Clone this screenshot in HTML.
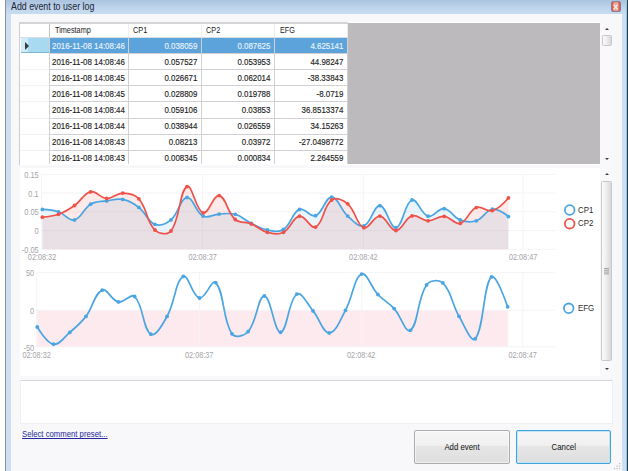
<!DOCTYPE html><html><head><meta charset="utf-8"><style>
*{margin:0;padding:0;box-sizing:border-box}
html,body{width:628px;height:471px;overflow:hidden;background:#fff;font-family:"Liberation Sans",sans-serif}
.frame{position:absolute;left:4.6px;top:0;width:623.4px;height:471px;background:#cddff2;border-left:1.6px solid #8c8f94}
.frr{position:absolute;left:626px;top:0;width:2px;height:471px;background:linear-gradient(90deg,#86cdee 0,#86cdee 50%,#343a3c 50%)}
.titlebar{position:absolute;left:6.2px;top:0;width:619.8px;height:14px;background:linear-gradient(#abc4df,#c3d9ee 75%,#c6dcf0)}
.title{position:absolute;left:11px;top:1.2px;font-size:10.2px;line-height:12px;color:#1b2433;white-space:nowrap;transform-origin:0 0;transform:scaleX(0.865)}
.client{position:absolute;left:11px;top:13.5px;width:611px;height:458px;background:#f8f8fb}
.closebtn{position:absolute;left:611px;top:1.2px;width:10px;height:10.5px;border-radius:2px;background:linear-gradient(90deg,#d9503a,#eea392 35%,#eea392 65%,#d9503a);border:1px solid #8f7890}

.hdr{position:absolute;background:#fff;border-bottom:1px solid #d9d6d9}
.ht{position:absolute;height:15px;line-height:15px;font-size:9px;color:#222;white-space:nowrap;transform-origin:0 50%;transform:scaleX(.81)}
.row{position:absolute;left:30px;width:299px;height:15.95px;background:#fff;border-bottom:1px solid #cfcccf}
.row.sel{background:#5ba3da;border-bottom:1px solid #cfcccf}
.rh{position:absolute;left:0;width:30px;height:15.95px;background:#f8f8fa;border-bottom:1px solid #e2e0e2}
.rhsel{background:linear-gradient(90deg,#b8e2f6,#a6d6f0);border-bottom:1px solid #7fb3cf}
.t,.tsel{position:absolute;height:15.3px;line-height:16.4px;font-size:9.6px;color:#1a1a1a;white-space:nowrap;-webkit-text-stroke:0.15px currentColor}
.tsel{color:#eaf3fb}
.l{transform-origin:0 50%;transform:scaleX(.825)}
.r{text-align:right;transform-origin:100% 50%;transform:scaleX(.825)}
.vl{position:absolute;width:1px;background:#d2d0d3}
.tri{position:absolute;left:25px;top:41.5px;width:0;height:0;border-left:4px solid #3a3a3a;border-top:4px solid transparent;border-bottom:4px solid transparent}
.gray{position:absolute;left:348px;top:23px;width:252px;height:141.3px;background:#bcbabd}
.sb{position:absolute;background:#f9f9fb}
.arrup{position:absolute;width:0;height:0;border-left:2.8px solid transparent;border-right:2.8px solid transparent;border-bottom:2.8px solid #3c3c3c}
.arrdn{position:absolute;width:0;height:0;border-left:2.8px solid transparent;border-right:2.8px solid transparent;border-top:2.8px solid #3c3c3c}
.thumb{position:absolute;border:1px solid #c8c8ca;border-radius:1.5px;background:linear-gradient(90deg,#fbfbfb,#f0f0f0 40%,#d8d8da)}
.panel{position:absolute;left:20px;top:167.5px;width:581px;height:208px;background:#fff}
.tb{position:absolute;left:19.5px;top:380px;width:593.3px;height:44px;background:#fff;border:1px solid #f0eff3;border-top:1px solid #d9d7dd}
.link{position:absolute;left:21.7px;top:429.3px;font-size:8.6px;color:#26269a;text-decoration:underline;white-space:nowrap;transform-origin:0 0;transform:scaleX(.9)}
.btn{position:absolute;top:430px;width:96px;height:34px;border:1px solid #ababab;border-radius:2px;background:linear-gradient(#f6f6f6 0,#f0f0f0 45%,#e6e6e6 47%,#dedede 100%);box-shadow:inset 0 0 0 1px rgba(255,255,255,.55);font-size:8.7px;color:#111;line-height:32px}
.btn span{position:absolute;left:0;right:0;text-align:center;transform:scaleX(.9)}
.btn.def{border:1px solid #3fa3dc;box-shadow:inset 0 0 0 1px #c2e6f8}
</style></head><body>
<div class="frame"></div><div class="frr"></div>
<div class="titlebar"></div>
<div class="title">Add event to user log</div>
<div class="closebtn"></div><svg style="position:absolute;left:612px;top:2px" width="9" height="9"><path d="M1.6,2.6 L5.8,7.6 M5.8,2.6 L1.6,7.6" stroke="#ece6ea" stroke-width="1.5"/></svg>
<div class="client"></div>
<div style="position:absolute;left:19px;top:22px;width:581px;height:143px;background:#fff"></div><div style="position:absolute;left:19px;top:36.6px;width:329px;height:1px;background:#d8dde3"></div><div style="position:absolute;left:49px;top:37.60px;width:299px;height:15.5px;background:#5ba3da"></div><div style="position:absolute;left:21px;top:37.60px;width:28px;height:15.9px;background:linear-gradient(90deg,#cdebf8 0,#cdebf8 7px,#a9dbf2 7px,#a6d8f0 100%);border-bottom:1.2px solid #7fb5d3"></div><div style="position:absolute;left:49px;top:53.10px;width:299px;height:1px;background:#d2d0d3"></div><div class="tsel l" style="left:51.8px;top:37.60px">2016-11-08 14:08:46</div><div class="tsel r" style="left:128px;width:69.4px;top:37.60px">0.038059</div><div class="tsel r" style="left:201px;width:69.4px;top:37.60px">0.087625</div><div class="tsel r" style="left:274px;width:69.4px;top:37.60px">4.625141</div><div style="position:absolute;left:49px;top:69.20px;width:299px;height:1px;background:#d2d0d3"></div><div style="position:absolute;left:20px;top:69.20px;width:29px;height:1px;background:#f3f2f4"></div><div class="t l" style="left:51.8px;top:53.70px">2016-11-08 14:08:46</div><div class="t r" style="left:128px;width:69.4px;top:53.70px">0.057527</div><div class="t r" style="left:201px;width:69.4px;top:53.70px">0.053953</div><div class="t r" style="left:274px;width:69.4px;top:53.70px">44.98247</div><div style="position:absolute;left:49px;top:85.30px;width:299px;height:1px;background:#d2d0d3"></div><div style="position:absolute;left:20px;top:85.30px;width:29px;height:1px;background:#f3f2f4"></div><div class="t l" style="left:51.8px;top:69.80px">2016-11-08 14:08:45</div><div class="t r" style="left:128px;width:69.4px;top:69.80px">0.026671</div><div class="t r" style="left:201px;width:69.4px;top:69.80px">0.062014</div><div class="t r" style="left:274px;width:69.4px;top:69.80px">-38.33843</div><div style="position:absolute;left:49px;top:101.40px;width:299px;height:1px;background:#d2d0d3"></div><div style="position:absolute;left:20px;top:101.40px;width:29px;height:1px;background:#f3f2f4"></div><div class="t l" style="left:51.8px;top:85.90px">2016-11-08 14:08:45</div><div class="t r" style="left:128px;width:69.4px;top:85.90px">0.028809</div><div class="t r" style="left:201px;width:69.4px;top:85.90px">0.019788</div><div class="t r" style="left:274px;width:69.4px;top:85.90px">-8.0719</div><div style="position:absolute;left:49px;top:117.50px;width:299px;height:1px;background:#d2d0d3"></div><div style="position:absolute;left:20px;top:117.50px;width:29px;height:1px;background:#f3f2f4"></div><div class="t l" style="left:51.8px;top:102.00px">2016-11-08 14:08:44</div><div class="t r" style="left:128px;width:69.4px;top:102.00px">0.059106</div><div class="t r" style="left:201px;width:69.4px;top:102.00px">0.03853</div><div class="t r" style="left:274px;width:69.4px;top:102.00px">36.8513374</div><div style="position:absolute;left:49px;top:133.60px;width:299px;height:1px;background:#d2d0d3"></div><div style="position:absolute;left:20px;top:133.60px;width:29px;height:1px;background:#f3f2f4"></div><div class="t l" style="left:51.8px;top:118.10px">2016-11-08 14:08:44</div><div class="t r" style="left:128px;width:69.4px;top:118.10px">0.038944</div><div class="t r" style="left:201px;width:69.4px;top:118.10px">0.026559</div><div class="t r" style="left:274px;width:69.4px;top:118.10px">34.15263</div><div style="position:absolute;left:49px;top:149.70px;width:299px;height:1px;background:#d2d0d3"></div><div style="position:absolute;left:20px;top:149.70px;width:29px;height:1px;background:#f3f2f4"></div><div class="t l" style="left:51.8px;top:134.20px">2016-11-08 14:08:43</div><div class="t r" style="left:128px;width:69.4px;top:134.20px">0.08213</div><div class="t r" style="left:201px;width:69.4px;top:134.20px">0.03972</div><div class="t r" style="left:274px;width:69.4px;top:134.20px">-27.0498772</div><div class="t l" style="left:51.8px;top:150.30px">2016-11-08 14:08:43</div><div class="t r" style="left:128px;width:69.4px;top:150.30px">0.008345</div><div class="t r" style="left:201px;width:69.4px;top:150.30px">0.000834</div><div class="t r" style="left:274px;width:69.4px;top:150.30px">2.264559</div><div class="ht" style="left:55.3px;top:22.5px">Timestamp</div><div class="ht" style="left:132.8px;top:22.5px">CP1</div><div class="ht" style="left:206px;top:22.5px">CP2</div><div class="ht" style="left:279.9px;top:22.5px">EFG</div><div class="vl" style="left:49px;top:37.6px;height:126.8px"></div><div class="vl" style="left:49px;top:23px;height:14px;background:#c4c3c6"></div><div class="vl" style="left:128px;top:37.6px;height:126.8px"></div><div class="vl" style="left:128px;top:23px;height:14px;background:#eeeeee"></div><div class="vl" style="left:201px;top:37.6px;height:126.8px"></div><div class="vl" style="left:201px;top:23px;height:14px;background:#eeeeee"></div><div class="vl" style="left:274px;top:37.6px;height:126.8px"></div><div class="vl" style="left:274px;top:23px;height:14px;background:#eeeeee"></div><div class="vl" style="left:347px;top:37.6px;height:126.8px"></div><div class="vl" style="left:347px;top:23px;height:14px;background:#eeeeee"></div><div class="tri"></div><div class="gray"></div><div style="position:absolute;left:19px;top:21.9px;width:329px;height:1.9px;background:#d4d3d6"></div><div style="position:absolute;left:19px;top:22px;width:1px;height:143px;background:#cfcdd0"></div>
<div class="sb" style="left:600px;top:23px;width:13px;height:142px"></div>
<div class="arrup" style="left:604.7px;top:27.6px"></div>
<div class="thumb" style="left:601.6px;top:35.4px;width:10.5px;height:11px"></div>
<div class="arrdn" style="left:604.7px;top:157.5px"></div>
<div class="panel"></div>
<div class="sb" style="left:600px;top:167px;width:13px;height:208px"></div>
<div class="arrup" style="left:604.7px;top:172.6px"></div>
<div class="thumb" style="left:601.2px;top:181.2px;width:10.8px;height:179.6px"></div>
<div class="arrdn" style="left:604.7px;top:368px"></div><svg style="position:absolute;left:603px;top:267px" width="7" height="8"><g stroke="#8e8e90" stroke-width="0.8"><line x1="1" y1="1.5" x2="6" y2="1.5"/><line x1="1" y1="3.3" x2="6" y2="3.3"/><line x1="1" y1="5.1" x2="6" y2="5.1"/><line x1="1" y1="6.9" x2="6" y2="6.9"/></g></svg>
<svg width="628" height="471" style="position:absolute;left:0;top:0">
<defs><clipPath id="cp"><rect x="18" y="167" width="583" height="208"/></clipPath></defs>
<g clip-path="url(#cp)">
<line x1="41.6" y1="174.4" x2="556" y2="174.4" stroke="#f5f3f6" stroke-width="1"/><line x1="41.6" y1="193.1" x2="556" y2="193.1" stroke="#f5f3f6" stroke-width="1"/><line x1="41.6" y1="211.8" x2="556" y2="211.8" stroke="#f5f3f6" stroke-width="1"/><line x1="41.6" y1="230.6" x2="556" y2="230.6" stroke="#f5f3f6" stroke-width="1"/><line x1="41.6" y1="249.3" x2="556" y2="249.3" stroke="#f5f3f6" stroke-width="1"/><line x1="41.6" y1="174.4" x2="41.6" y2="249.3" stroke="#f5f3f6" stroke-width="1"/><line x1="202.6" y1="174.4" x2="202.6" y2="249.3" stroke="#f5f3f6" stroke-width="1"/><line x1="363.3" y1="174.4" x2="363.3" y2="249.3" stroke="#f5f3f6" stroke-width="1"/><line x1="523.1" y1="174.4" x2="523.1" y2="249.3" stroke="#f5f3f6" stroke-width="1"/>
<path d="M42.40,209.39 C42.40,209.39 52.37,209.79 58.47,211.79 C65.23,214.00 68.82,221.27 74.54,219.93 C81.68,218.24 83.18,208.61 90.61,204.21 C96.03,201.00 100.20,201.88 106.68,200.91 C113.06,199.96 116.66,198.18 122.75,199.41 C129.52,200.78 133.23,203.07 138.82,207.40 C146.09,213.03 147.39,221.39 154.89,224.31 C160.25,226.40 166.12,223.96 170.96,219.93 C178.98,213.24 180.23,198.31 187.03,197.50 C193.09,196.78 195.35,212.09 203.10,216.10 C208.21,218.74 212.72,214.47 219.17,214.11 C225.57,213.75 229.25,212.59 235.24,214.30 C242.11,216.26 244.70,220.07 251.31,223.30 C257.56,226.35 260.70,228.74 267.38,230.01 C273.55,231.19 278.50,232.59 283.45,229.41 C291.35,224.34 291.83,212.67 299.52,209.39 C304.69,207.18 310.29,217.72 315.59,215.69 C323.14,212.80 325.27,197.01 331.66,197.09 C338.13,197.17 340.40,209.55 347.73,216.10 C353.26,221.04 358.38,227.57 363.80,225.81 C371.23,223.41 373.62,205.35 379.87,205.71 C386.48,206.09 390.03,228.72 395.94,227.67 C402.89,226.44 404.51,202.68 412.01,200.00 C417.36,198.09 420.85,214.25 428.08,216.20 C433.71,217.71 438.05,207.91 444.15,208.64 C450.91,209.43 453.15,217.32 460.22,220.00 C466.00,222.19 470.53,222.73 476.29,220.80 C483.38,218.42 485.56,210.13 492.36,209.23 C498.42,208.42 508.43,216.53 508.43,216.53 L508.43,249.30 L42.40,249.30 Z" fill="rgba(74,165,226,0.12)"/>
<path d="M42.40,217.19 C42.40,217.19 52.41,216.50 58.47,214.30 C65.27,211.82 68.57,209.67 74.54,205.49 C81.42,200.67 83.57,193.33 90.61,191.80 C96.42,190.54 100.17,198.25 106.68,198.51 C113.02,198.77 116.34,193.05 122.75,193.11 C129.20,193.17 134.62,193.99 138.82,198.81 C147.47,208.75 146.08,221.19 154.89,230.01 C158.93,234.06 167.69,235.40 170.96,230.99 C180.55,218.03 179.24,190.99 187.03,186.59 C192.10,183.72 195.82,210.76 203.10,212.80 C208.68,214.36 213.39,194.38 219.17,195.59 C226.25,197.07 227.09,212.34 235.24,219.51 C239.95,223.66 245.15,221.45 251.31,223.90 C258.01,226.57 260.56,230.52 267.38,232.30 C273.42,233.88 278.13,234.96 283.45,232.30 C290.98,228.53 292.58,217.34 299.52,216.21 C305.44,215.25 310.69,229.56 315.59,227.09 C323.54,223.08 323.23,206.12 331.66,200.01 C336.08,196.81 343.04,199.77 347.73,203.80 C355.90,210.84 356.18,224.77 363.80,227.69 C369.04,229.69 373.71,215.56 379.87,216.10 C386.57,216.68 389.53,230.53 395.94,230.49 C402.39,230.45 404.77,218.08 412.01,215.91 C417.62,214.22 421.63,220.75 428.08,220.84 C434.48,220.93 437.88,215.86 444.15,216.35 C450.74,216.87 454.60,224.92 460.22,223.38 C467.45,221.40 468.84,210.52 476.29,207.54 C481.69,205.39 486.65,212.28 492.36,210.57 C499.50,208.43 508.43,197.94 508.43,197.94 L508.43,249.30 L42.40,249.30 Z" fill="rgba(239,81,73,0.12)"/>
<path d="M42.40,209.39 C42.40,209.39 52.37,209.79 58.47,211.79 C65.23,214.00 68.82,221.27 74.54,219.93 C81.68,218.24 83.18,208.61 90.61,204.21 C96.03,201.00 100.20,201.88 106.68,200.91 C113.06,199.96 116.66,198.18 122.75,199.41 C129.52,200.78 133.23,203.07 138.82,207.40 C146.09,213.03 147.39,221.39 154.89,224.31 C160.25,226.40 166.12,223.96 170.96,219.93 C178.98,213.24 180.23,198.31 187.03,197.50 C193.09,196.78 195.35,212.09 203.10,216.10 C208.21,218.74 212.72,214.47 219.17,214.11 C225.57,213.75 229.25,212.59 235.24,214.30 C242.11,216.26 244.70,220.07 251.31,223.30 C257.56,226.35 260.70,228.74 267.38,230.01 C273.55,231.19 278.50,232.59 283.45,229.41 C291.35,224.34 291.83,212.67 299.52,209.39 C304.69,207.18 310.29,217.72 315.59,215.69 C323.14,212.80 325.27,197.01 331.66,197.09 C338.13,197.17 340.40,209.55 347.73,216.10 C353.26,221.04 358.38,227.57 363.80,225.81 C371.23,223.41 373.62,205.35 379.87,205.71 C386.48,206.09 390.03,228.72 395.94,227.67 C402.89,226.44 404.51,202.68 412.01,200.00 C417.36,198.09 420.85,214.25 428.08,216.20 C433.71,217.71 438.05,207.91 444.15,208.64 C450.91,209.43 453.15,217.32 460.22,220.00 C466.00,222.19 470.53,222.73 476.29,220.80 C483.38,218.42 485.56,210.13 492.36,209.23 C498.42,208.42 508.43,216.53 508.43,216.53" fill="none" stroke="#4aa5e2" stroke-width="1.7"/>
<path d="M42.40,217.19 C42.40,217.19 52.41,216.50 58.47,214.30 C65.27,211.82 68.57,209.67 74.54,205.49 C81.42,200.67 83.57,193.33 90.61,191.80 C96.42,190.54 100.17,198.25 106.68,198.51 C113.02,198.77 116.34,193.05 122.75,193.11 C129.20,193.17 134.62,193.99 138.82,198.81 C147.47,208.75 146.08,221.19 154.89,230.01 C158.93,234.06 167.69,235.40 170.96,230.99 C180.55,218.03 179.24,190.99 187.03,186.59 C192.10,183.72 195.82,210.76 203.10,212.80 C208.68,214.36 213.39,194.38 219.17,195.59 C226.25,197.07 227.09,212.34 235.24,219.51 C239.95,223.66 245.15,221.45 251.31,223.90 C258.01,226.57 260.56,230.52 267.38,232.30 C273.42,233.88 278.13,234.96 283.45,232.30 C290.98,228.53 292.58,217.34 299.52,216.21 C305.44,215.25 310.69,229.56 315.59,227.09 C323.54,223.08 323.23,206.12 331.66,200.01 C336.08,196.81 343.04,199.77 347.73,203.80 C355.90,210.84 356.18,224.77 363.80,227.69 C369.04,229.69 373.71,215.56 379.87,216.10 C386.57,216.68 389.53,230.53 395.94,230.49 C402.39,230.45 404.77,218.08 412.01,215.91 C417.62,214.22 421.63,220.75 428.08,220.84 C434.48,220.93 437.88,215.86 444.15,216.35 C450.74,216.87 454.60,224.92 460.22,223.38 C467.45,221.40 468.84,210.52 476.29,207.54 C481.69,205.39 486.65,212.28 492.36,210.57 C499.50,208.43 508.43,197.94 508.43,197.94" fill="none" stroke="#ef5149" stroke-width="1.7"/>
<circle cx="42.40" cy="209.39" r="1.9" fill="#4aa5e2"/><circle cx="58.47" cy="211.79" r="1.9" fill="#4aa5e2"/><circle cx="74.54" cy="219.93" r="1.9" fill="#4aa5e2"/><circle cx="90.61" cy="204.21" r="1.9" fill="#4aa5e2"/><circle cx="106.68" cy="200.91" r="1.9" fill="#4aa5e2"/><circle cx="122.75" cy="199.41" r="1.9" fill="#4aa5e2"/><circle cx="138.82" cy="207.40" r="1.9" fill="#4aa5e2"/><circle cx="154.89" cy="224.31" r="1.9" fill="#4aa5e2"/><circle cx="170.96" cy="219.93" r="1.9" fill="#4aa5e2"/><circle cx="187.03" cy="197.50" r="1.9" fill="#4aa5e2"/><circle cx="203.10" cy="216.10" r="1.9" fill="#4aa5e2"/><circle cx="219.17" cy="214.11" r="1.9" fill="#4aa5e2"/><circle cx="235.24" cy="214.30" r="1.9" fill="#4aa5e2"/><circle cx="251.31" cy="223.30" r="1.9" fill="#4aa5e2"/><circle cx="267.38" cy="230.01" r="1.9" fill="#4aa5e2"/><circle cx="283.45" cy="229.41" r="1.9" fill="#4aa5e2"/><circle cx="299.52" cy="209.39" r="1.9" fill="#4aa5e2"/><circle cx="315.59" cy="215.69" r="1.9" fill="#4aa5e2"/><circle cx="331.66" cy="197.09" r="1.9" fill="#4aa5e2"/><circle cx="347.73" cy="216.10" r="1.9" fill="#4aa5e2"/><circle cx="363.80" cy="225.81" r="1.9" fill="#4aa5e2"/><circle cx="379.87" cy="205.71" r="1.9" fill="#4aa5e2"/><circle cx="395.94" cy="227.67" r="1.9" fill="#4aa5e2"/><circle cx="412.01" cy="200.00" r="1.9" fill="#4aa5e2"/><circle cx="428.08" cy="216.20" r="1.9" fill="#4aa5e2"/><circle cx="444.15" cy="208.64" r="1.9" fill="#4aa5e2"/><circle cx="460.22" cy="220.00" r="1.9" fill="#4aa5e2"/><circle cx="476.29" cy="220.80" r="1.9" fill="#4aa5e2"/><circle cx="492.36" cy="209.23" r="1.9" fill="#4aa5e2"/><circle cx="508.43" cy="216.53" r="1.9" fill="#4aa5e2"/><circle cx="42.40" cy="217.19" r="1.9" fill="#ef5149"/><circle cx="58.47" cy="214.30" r="1.9" fill="#ef5149"/><circle cx="74.54" cy="205.49" r="1.9" fill="#ef5149"/><circle cx="90.61" cy="191.80" r="1.9" fill="#ef5149"/><circle cx="106.68" cy="198.51" r="1.9" fill="#ef5149"/><circle cx="122.75" cy="193.11" r="1.9" fill="#ef5149"/><circle cx="138.82" cy="198.81" r="1.9" fill="#ef5149"/><circle cx="154.89" cy="230.01" r="1.9" fill="#ef5149"/><circle cx="170.96" cy="230.99" r="1.9" fill="#ef5149"/><circle cx="187.03" cy="186.59" r="1.9" fill="#ef5149"/><circle cx="203.10" cy="212.80" r="1.9" fill="#ef5149"/><circle cx="219.17" cy="195.59" r="1.9" fill="#ef5149"/><circle cx="235.24" cy="219.51" r="1.9" fill="#ef5149"/><circle cx="251.31" cy="223.90" r="1.9" fill="#ef5149"/><circle cx="267.38" cy="232.30" r="1.9" fill="#ef5149"/><circle cx="283.45" cy="232.30" r="1.9" fill="#ef5149"/><circle cx="299.52" cy="216.21" r="1.9" fill="#ef5149"/><circle cx="315.59" cy="227.09" r="1.9" fill="#ef5149"/><circle cx="331.66" cy="200.01" r="1.9" fill="#ef5149"/><circle cx="347.73" cy="203.80" r="1.9" fill="#ef5149"/><circle cx="363.80" cy="227.69" r="1.9" fill="#ef5149"/><circle cx="379.87" cy="216.10" r="1.9" fill="#ef5149"/><circle cx="395.94" cy="230.49" r="1.9" fill="#ef5149"/><circle cx="412.01" cy="215.91" r="1.9" fill="#ef5149"/><circle cx="428.08" cy="220.84" r="1.9" fill="#ef5149"/><circle cx="444.15" cy="216.35" r="1.9" fill="#ef5149"/><circle cx="460.22" cy="223.38" r="1.9" fill="#ef5149"/><circle cx="476.29" cy="207.54" r="1.9" fill="#ef5149"/><circle cx="492.36" cy="210.57" r="1.9" fill="#ef5149"/><circle cx="508.43" cy="197.94" r="1.9" fill="#ef5149"/>
<text transform="translate(38.6,178.0) scale(0.9,1)" text-anchor="end" font-family="Liberation Sans" font-size="8.2" fill="#a4a4a8">0.15</text><text transform="translate(38.6,196.7) scale(0.9,1)" text-anchor="end" font-family="Liberation Sans" font-size="8.2" fill="#a4a4a8">0.1</text><text transform="translate(38.6,215.4) scale(0.9,1)" text-anchor="end" font-family="Liberation Sans" font-size="8.2" fill="#a4a4a8">0.05</text><text transform="translate(38.6,234.2) scale(0.9,1)" text-anchor="end" font-family="Liberation Sans" font-size="8.2" fill="#a4a4a8">0</text><text transform="translate(38.6,252.9) scale(0.9,1)" text-anchor="end" font-family="Liberation Sans" font-size="8.2" fill="#a4a4a8">-0.05</text><text transform="translate(42.0,259.7) scale(0.89,1)" text-anchor="middle" font-family="Liberation Sans" font-size="8.2" fill="#a4a4a8">02:08:32</text><text transform="translate(202.6,259.7) scale(0.89,1)" text-anchor="middle" font-family="Liberation Sans" font-size="8.2" fill="#a4a4a8">02:08:37</text><text transform="translate(363.3,259.7) scale(0.89,1)" text-anchor="middle" font-family="Liberation Sans" font-size="8.2" fill="#a4a4a8">02:08:42</text><text transform="translate(523.1,259.7) scale(0.89,1)" text-anchor="middle" font-family="Liberation Sans" font-size="8.2" fill="#a4a4a8">02:08:47</text>
<rect x="37.3" y="310.3" width="470.38" height="36.5" fill="#fdeaee"/>
<line x1="36.6" y1="272.6" x2="555" y2="272.6" stroke="#f5f3f6" stroke-width="1"/><line x1="36.6" y1="310.3" x2="555" y2="310.3" stroke="#f5f3f6" stroke-width="1"/><line x1="36.6" y1="346.8" x2="555" y2="346.8" stroke="#f5f3f6" stroke-width="1"/><line x1="36.6" y1="272.6" x2="36.6" y2="346.8" stroke="#f5f3f6" stroke-width="1"/><line x1="199.5" y1="272.6" x2="199.5" y2="346.8" stroke="#f5f3f6" stroke-width="1"/><line x1="361.7" y1="272.6" x2="361.7" y2="346.8" stroke="#f5f3f6" stroke-width="1"/><line x1="522.8" y1="272.6" x2="522.8" y2="346.8" stroke="#f5f3f6" stroke-width="1"/>
<path d="M37.30,327.00 C37.30,327.00 46.50,343.04 53.52,344.21 C59.47,345.20 63.67,337.62 69.74,332.41 C76.64,326.49 80.44,323.57 85.96,316.38 C93.42,306.68 94.31,293.70 102.18,290.19 C107.29,287.91 111.40,300.56 118.40,301.92 C124.38,303.08 130.80,292.70 134.62,296.50 C143.78,305.61 142.66,329.18 150.84,334.19 C155.64,337.13 162.41,324.66 167.06,316.38 C175.38,301.57 175.30,280.99 183.28,276.46 C188.27,273.63 192.41,296.64 199.50,297.98 C205.38,299.10 211.91,278.41 215.72,282.62 C224.88,292.75 222.00,318.83 231.94,333.82 C234.97,338.39 244.33,335.99 248.16,331.52 C257.30,320.86 257.95,295.83 264.38,295.98 C270.92,296.13 274.25,332.63 280.60,332.26 C287.22,331.88 288.52,299.59 296.82,294.12 C301.49,291.05 307.07,303.75 313.04,310.89 C320.04,319.27 322.83,333.05 329.26,332.93 C335.80,332.81 340.13,320.01 345.48,310.30 C353.11,296.47 353.87,277.91 361.70,274.09 C366.84,271.58 370.81,286.93 377.92,294.50 C383.79,300.74 388.40,302.27 394.14,308.62 C401.38,316.62 405.69,333.78 410.36,330.37 C418.66,324.31 416.89,299.12 426.58,284.96 C429.86,280.16 438.83,279.12 442.80,282.96 C451.81,291.65 451.59,303.52 459.02,316.29 C464.57,325.83 471.32,343.51 475.24,338.75 C484.29,327.76 482.99,285.24 491.46,276.92 C495.97,272.49 507.68,306.87 507.68,306.87" fill="none" stroke="#4aa5e2" stroke-width="1.7"/>
<circle cx="37.30" cy="327.00" r="1.9" fill="#4aa5e2"/><circle cx="53.52" cy="344.21" r="1.9" fill="#4aa5e2"/><circle cx="69.74" cy="332.41" r="1.9" fill="#4aa5e2"/><circle cx="85.96" cy="316.38" r="1.9" fill="#4aa5e2"/><circle cx="102.18" cy="290.19" r="1.9" fill="#4aa5e2"/><circle cx="118.40" cy="301.92" r="1.9" fill="#4aa5e2"/><circle cx="134.62" cy="296.50" r="1.9" fill="#4aa5e2"/><circle cx="150.84" cy="334.19" r="1.9" fill="#4aa5e2"/><circle cx="167.06" cy="316.38" r="1.9" fill="#4aa5e2"/><circle cx="183.28" cy="276.46" r="1.9" fill="#4aa5e2"/><circle cx="199.50" cy="297.98" r="1.9" fill="#4aa5e2"/><circle cx="215.72" cy="282.62" r="1.9" fill="#4aa5e2"/><circle cx="231.94" cy="333.82" r="1.9" fill="#4aa5e2"/><circle cx="248.16" cy="331.52" r="1.9" fill="#4aa5e2"/><circle cx="264.38" cy="295.98" r="1.9" fill="#4aa5e2"/><circle cx="280.60" cy="332.26" r="1.9" fill="#4aa5e2"/><circle cx="296.82" cy="294.12" r="1.9" fill="#4aa5e2"/><circle cx="313.04" cy="310.89" r="1.9" fill="#4aa5e2"/><circle cx="329.26" cy="332.93" r="1.9" fill="#4aa5e2"/><circle cx="345.48" cy="310.30" r="1.9" fill="#4aa5e2"/><circle cx="361.70" cy="274.09" r="1.9" fill="#4aa5e2"/><circle cx="377.92" cy="294.50" r="1.9" fill="#4aa5e2"/><circle cx="394.14" cy="308.62" r="1.9" fill="#4aa5e2"/><circle cx="410.36" cy="330.37" r="1.9" fill="#4aa5e2"/><circle cx="426.58" cy="284.96" r="1.9" fill="#4aa5e2"/><circle cx="442.80" cy="282.96" r="1.9" fill="#4aa5e2"/><circle cx="459.02" cy="316.29" r="1.9" fill="#4aa5e2"/><circle cx="475.24" cy="338.75" r="1.9" fill="#4aa5e2"/><circle cx="491.46" cy="276.92" r="1.9" fill="#4aa5e2"/><circle cx="507.68" cy="306.87" r="1.9" fill="#4aa5e2"/>
<text transform="translate(34.1,276.2) scale(0.9,1)" text-anchor="end" font-family="Liberation Sans" font-size="8.2" fill="#a4a4a8">50</text><text transform="translate(34.1,313.9) scale(0.9,1)" text-anchor="end" font-family="Liberation Sans" font-size="8.2" fill="#a4a4a8">0</text><text transform="translate(34.1,351.2) scale(0.9,1)" text-anchor="end" font-family="Liberation Sans" font-size="8.2" fill="#a4a4a8">-50</text><text transform="translate(36.6,357.8) scale(0.89,1)" text-anchor="middle" font-family="Liberation Sans" font-size="8.2" fill="#a4a4a8">02:08:32</text><text transform="translate(199.2,357.8) scale(0.89,1)" text-anchor="middle" font-family="Liberation Sans" font-size="8.2" fill="#a4a4a8">02:08:37</text><text transform="translate(361.2,357.8) scale(0.89,1)" text-anchor="middle" font-family="Liberation Sans" font-size="8.2" fill="#a4a4a8">02:08:42</text><text transform="translate(522.6,357.8) scale(0.89,1)" text-anchor="middle" font-family="Liberation Sans" font-size="8.2" fill="#a4a4a8">02:08:47</text>
<circle cx="569.7" cy="210" r="4.8" fill="none" stroke="#4aa5e2" stroke-width="1.8"/><circle cx="569.7" cy="223.7" r="4.8" fill="none" stroke="#ef5149" stroke-width="1.8"/><circle cx="568.7" cy="308.3" r="4.8" fill="none" stroke="#4aa5e2" stroke-width="1.8"/><text transform="translate(578,212.7) scale(0.86,1)" font-family="Liberation Sans" font-size="9.2" fill="#2e2e2e" transform-origin="0 0">CP1</text><text transform="translate(578,226.4) scale(0.86,1)" font-family="Liberation Sans" font-size="9.2" fill="#2e2e2e" transform-origin="0 0">CP2</text><text transform="translate(578,310.6) scale(0.86,1)" font-family="Liberation Sans" font-size="9.2" fill="#2e2e2e" transform-origin="0 0">EFG</text>
</g>
</svg>
<div class="tb"></div>
<div class="link">Select comment preset...</div>
<div class="btn" style="left:414px"><span>Add event</span></div>
<svg style="position:absolute;left:612px;top:462px" width="10" height="9"><g fill="#b9bcc4"><rect x="7" y="1" width="1.2" height="1.2"/><rect x="4.5" y="3.5" width="1.2" height="1.2"/><rect x="7" y="3.5" width="1.2" height="1.2"/><rect x="2" y="6" width="1.2" height="1.2"/><rect x="4.5" y="6" width="1.2" height="1.2"/><rect x="7" y="6" width="1.2" height="1.2"/></g></svg><div class="btn def" style="left:515.8px;width:95.6px"><span>Cancel</span></div>
</body></html>
